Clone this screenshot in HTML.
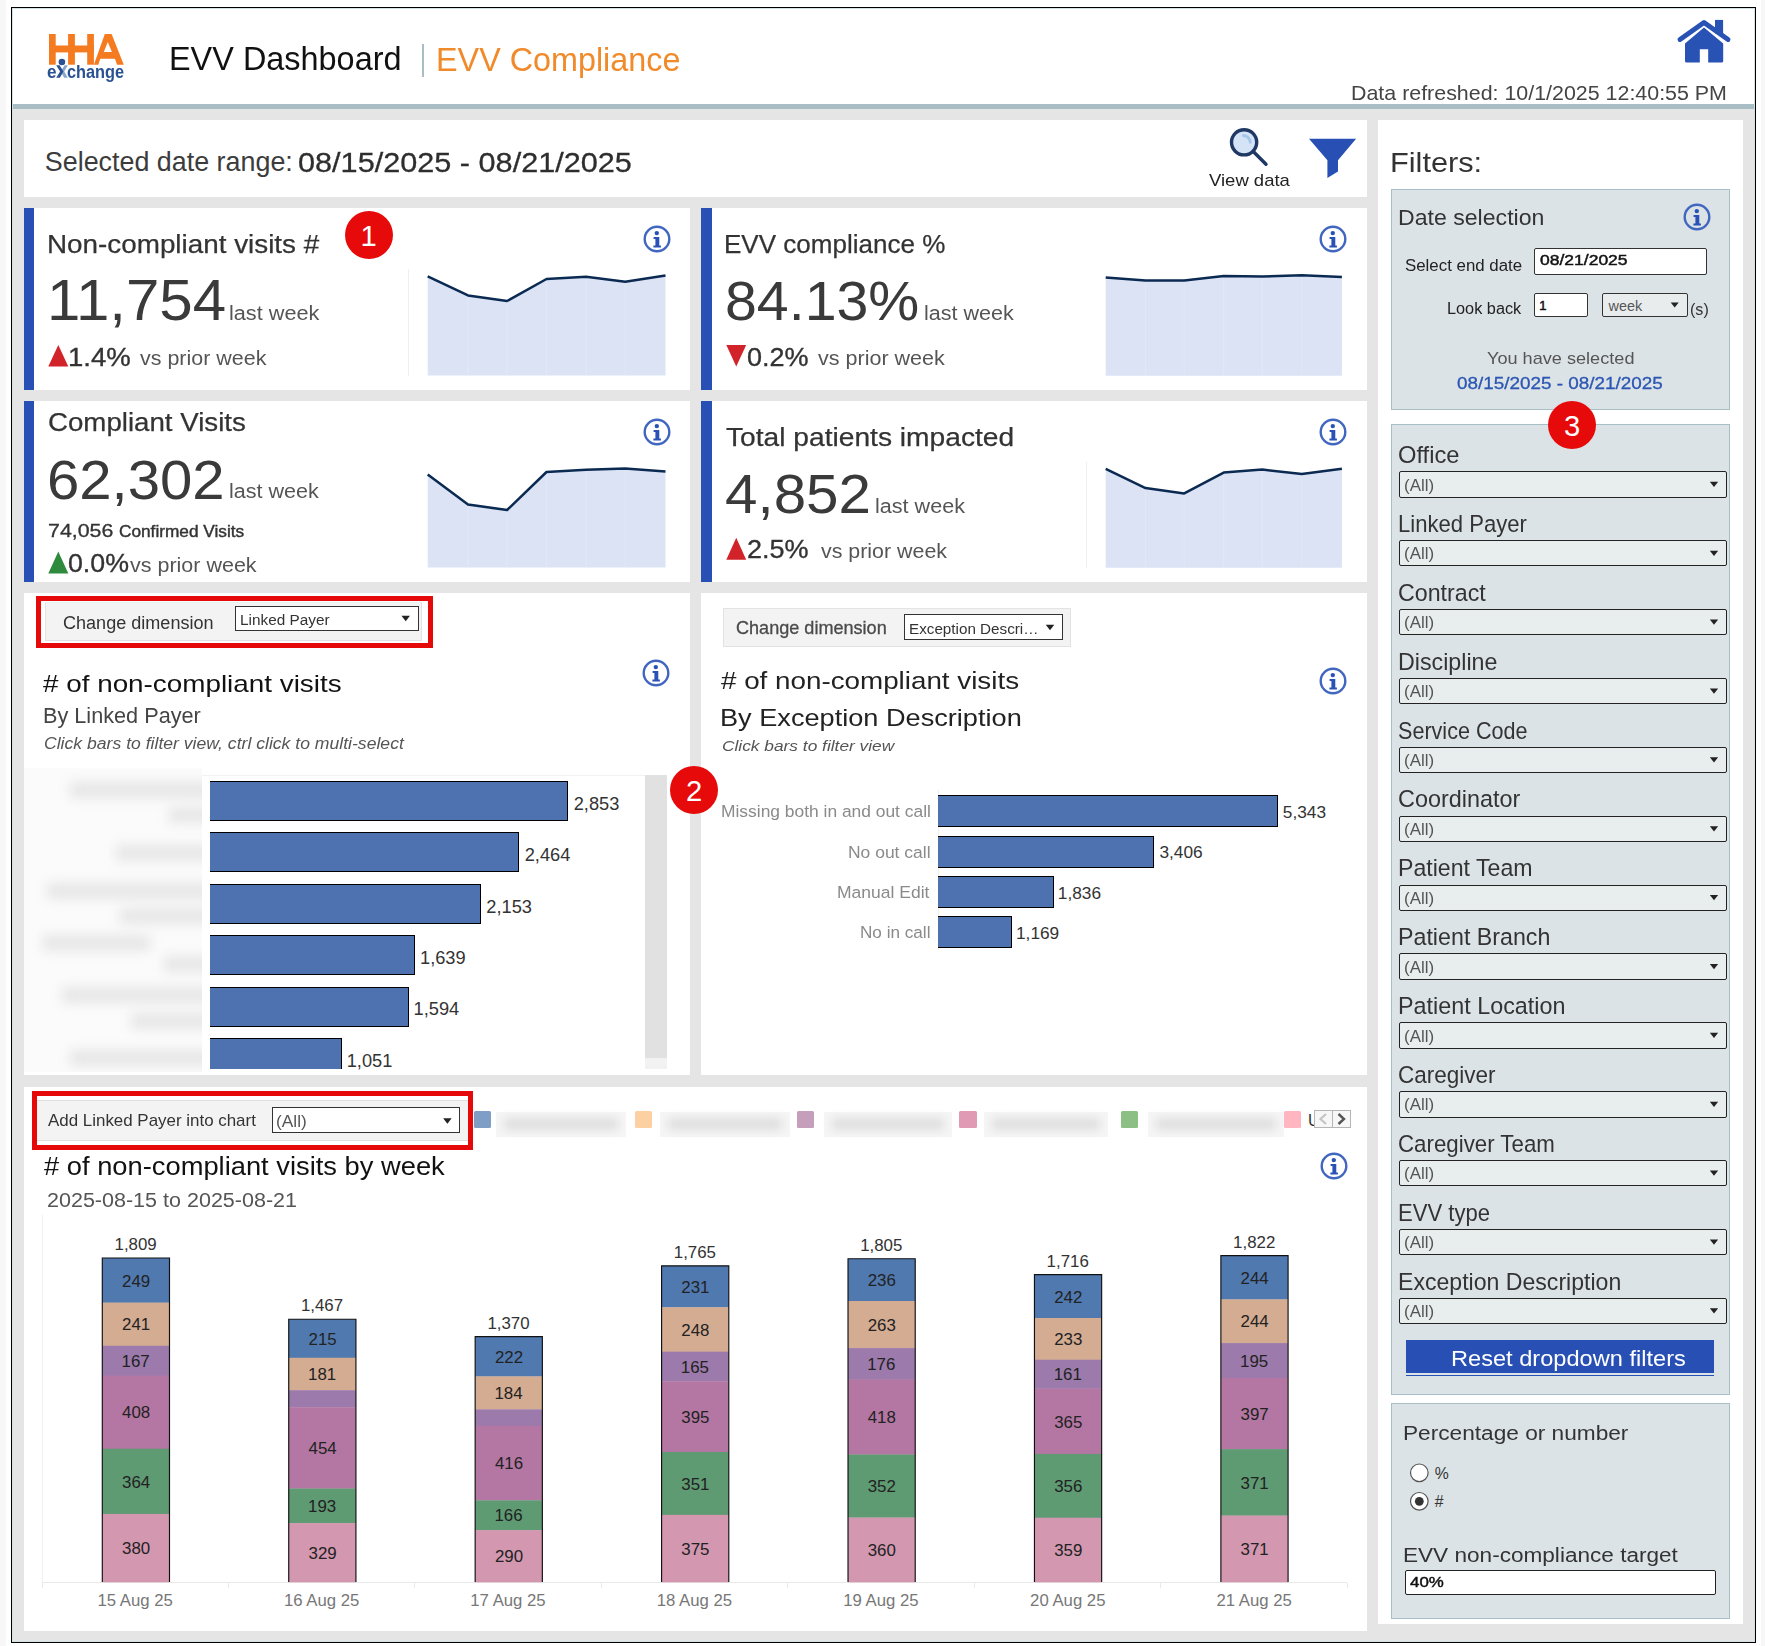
<!DOCTYPE html>
<html><head><meta charset="utf-8"><style>
html,body{margin:0;padding:0}
body{width:1765px;height:1646px;position:relative;overflow:hidden;background:#fff;font-family:"Liberation Sans",sans-serif}
.a{position:absolute}
.t{white-space:pre;line-height:1}
</style></head><body>
<div class="a" style="left:0px;top:0px;width:6px;height:1646px;background:#f7f7f7;"></div>
<div class="a" style="left:1761px;top:0px;width:4px;height:1646px;background:#f7f7f7;"></div>
<div class="a" style="left:11px;top:7px;width:1745px;height:1636px;background:#000;"></div>
<div class="a" style="left:12.4px;top:8.4px;width:1742.1999999999998px;height:1633.1999999999998px;background:#d3e2e5;"></div>
<div class="a" style="left:13.4px;top:9.4px;width:1740.1999999999998px;height:1631.1999999999998px;background:#fff;"></div>
<div class="a" style="left:13px;top:104px;width:1741px;height:4.5px;background:#a9bec4;"></div>
<div class="a" style="left:13px;top:108.5px;width:1741px;height:1532.5px;background:#e5e5e5;"></div>
<svg class="a" style="left:0;top:0" width="200" height="100" viewBox="0 0 200 100">
<g fill="#f47b20">
<rect x="49" y="34" width="6.7" height="30.7"/>
<rect x="68.1" y="34" width="6.8" height="30.7"/>
<rect x="49" y="45.5" width="45" height="6.9"/>
<rect x="87.2" y="34" width="6.7" height="30.7"/>
<path d="M104.8 34 L111.6 34 L123.8 64.7 L117.1 64.7 L114.9 58.7 L100.3 58.7 L98.3 64.7 L93.9 64.7 Z M103.8 52 L111.9 52 L107.8 42 Z" fill-rule="evenodd"/>
</g>
<circle cx="61.9" cy="62" r="3.3" fill="#2a5293"/>
</svg>
<div class="a t" style="left:46.9px;top:63.3px;font-size:18.00px;color:#2a5293;font-weight:700;font-style:normal;transform:scaleX(0.9500);transform-origin:left;">e</div>
<div class="a t" style="left:66.9px;top:63.3px;font-size:18.00px;color:#2a5293;font-weight:700;font-style:normal;transform:scaleX(0.9063);transform-origin:left;">change</div>
<svg class="a" style="left:0;top:0;overflow:visible" width="1" height="1">
<path d="M64.6 65.3 L67.8 65.3 L64.2 71.6 L67.8 77.8 L64.2 77.8 L60.6 71.6 Z" fill="#8aa5cc"/>
<path d="M56.2 65.3 L59.6 65.3 L63.4 71.6 L59.9 77.8 L56.2 77.8 L60.1 71.6 Z" fill="#2a5293"/>
</svg>
<div class="a t" style="left:169.1px;top:42.6px;font-size:32.78px;color:#111;font-weight:400;font-style:normal;transform:scaleX(0.9895);transform-origin:left;">EVV Dashboard</div>
<div class="a" style="left:421.5px;top:44.4px;width:2.0px;height:32.300000000000004px;background:#a9bec4;"></div>
<div class="a t" style="left:436.2px;top:42.8px;font-size:33.06px;color:#f08a2a;font-weight:400;font-style:normal;transform:scaleX(0.9784);transform-origin:left;">EVV Compliance</div>
<div class="a t" style="left:1350.7px;top:83.5px;font-size:19.48px;color:#444;font-weight:400;font-style:normal;transform:scaleX(1.0992);transform-origin:left;">Data refreshed: 10/1/2025 12:40:55 PM</div>
<svg class="a" style="left:1660px;top:0" width="90" height="80" viewBox="1660 0 90 80">
<rect x="1715" y="19.9" width="8.1" height="13.6" fill="#2852b4"/>
<path d="M1680 39.5 L1704 22.6 L1728 39.5" fill="none" stroke="#2852b4" stroke-width="4.9" stroke-linecap="round" stroke-linejoin="round"/>
<path d="M1685 43.6 L1704 27.6 L1723.2 43.6 L1723.2 61 Q1723.2 62.5 1721.7 62.5 L1708.2 62.5 L1708.2 49.3 L1699.8 49.3 L1699.8 62.5 L1686.5 62.5 Q1685 62.5 1685 61 Z" fill="#2852b4"/>
</svg>
<div class="a" style="left:24px;top:120px;width:1343px;height:77px;background:#fff;"></div>
<div class="a" style="left:24px;top:208px;width:666px;height:182px;background:#fff;"></div>
<div class="a" style="left:701px;top:208px;width:666px;height:182px;background:#fff;"></div>
<div class="a" style="left:24px;top:401px;width:666px;height:181px;background:#fff;"></div>
<div class="a" style="left:701px;top:401px;width:666px;height:181px;background:#fff;"></div>
<div class="a" style="left:24px;top:593px;width:666px;height:482px;background:#fff;"></div>
<div class="a" style="left:701px;top:593px;width:666px;height:482px;background:#fff;"></div>
<div class="a" style="left:24px;top:1087px;width:1343px;height:544px;background:#fff;"></div>
<div class="a" style="left:1378px;top:120px;width:365px;height:1504px;background:#fff;"></div>
<div class="a t" style="left:44.8px;top:149.1px;font-size:26.89px;color:#3c3c3c;font-weight:400;font-style:normal;">Selected date range:</div>
<div class="a t" style="left:298.3px;top:147.7px;font-size:28.53px;color:#2e2e2e;font-weight:400;font-style:normal;transform:scaleX(1.0744);transform-origin:left;-webkit-text-stroke:0.3px #2e2e2e;">08/15/2025 - 08/21/2025</div>
<svg class="a" style="left:0;top:0;overflow:visible" width="1" height="1">
<circle cx="1244.1" cy="142.3" r="12.6" fill="#d4e3f5" stroke="#1f3864" stroke-width="3.4"/>
<path d="M1243.5 135.5 A7.5 7.5 0 0 1 1250.3 142.2" fill="none" stroke="#a6c6ea" stroke-width="3" stroke-linecap="round"/>
<line x1="1254" y1="152.2" x2="1266" y2="164.2" stroke="#1f3864" stroke-width="3.4" stroke-linecap="round"/>
<path d="M1309 138.8 L1356.1 138.8 L1338 160.2 L1338 171.6 L1327.4 178 L1327.4 160.2 Z" fill="#2850b4"/>
</svg>
<div class="a t" style="left:1208.9px;top:171.6px;font-size:17.15px;color:#222;font-weight:400;font-style:normal;transform:scaleX(1.0786);transform-origin:left;">View data</div>
<div class="a" style="left:24px;top:208px;width:10px;height:182px;background:#2850b4;"></div>
<div class="a" style="left:701px;top:208px;width:11px;height:182px;background:#2850b4;"></div>
<div class="a" style="left:24px;top:401px;width:10px;height:181px;background:#2850b4;"></div>
<div class="a" style="left:701px;top:401px;width:11px;height:181px;background:#2850b4;"></div>
<div class="a t" style="left:47.3px;top:231.3px;font-size:26.61px;color:#333;font-weight:400;font-style:normal;transform:scaleX(1.0458);transform-origin:left;-webkit-text-stroke:0.25px #333;">Non-compliant visits #</div>
<div class="a t" style="left:46.8px;top:272.3px;font-size:56.93px;color:#3a3a3a;font-weight:400;font-style:normal;transform:scaleX(1.0543);transform-origin:left;">11,754</div>
<div class="a t" style="left:229.2px;top:302.8px;font-size:20.58px;color:#555;font-weight:400;font-style:normal;transform:scaleX(1.0535);transform-origin:left;">last week</div>
<svg class="a" style="left:0;top:0;overflow:visible" width="1" height="1"><path d="M48.3 366.6 L68.3 366.6 L58.3 345 Z" fill="#d2232a"/></svg>
<div class="a t" style="left:67.8px;top:343.5px;font-size:26.47px;color:#333;font-weight:400;font-style:normal;transform:scaleX(1.0399);transform-origin:left;-webkit-text-stroke:0.35px #333;">1.4%</div>
<div class="a t" style="left:140.0px;top:349.3px;font-size:19.62px;color:#555;font-weight:400;font-style:normal;transform:scaleX(1.0941);transform-origin:left;">vs prior week</div>
<div class="a" style="left:408px;top:269px;width:1px;height:107px;background:#efefef;"></div>
<svg class="a" style="left:0;top:0;overflow:visible" width="1" height="1">
<polygon points="427.7,375.5 427.7,276.4 468.0,295.4 507.1,301.0 546.5,279.0 586.1,276.7 625.2,281.8 665.5,275.5 665.5,375.5" fill="#dbe3f5"/>
<line x1="468.0" y1="297.4" x2="468.0" y2="375.5" stroke="#e2e8f7" stroke-width="1"/><line x1="507.1" y1="303.0" x2="507.1" y2="375.5" stroke="#e2e8f7" stroke-width="1"/><line x1="546.5" y1="281.0" x2="546.5" y2="375.5" stroke="#e2e8f7" stroke-width="1"/><line x1="586.1" y1="278.7" x2="586.1" y2="375.5" stroke="#e2e8f7" stroke-width="1"/><line x1="625.2" y1="283.8" x2="625.2" y2="375.5" stroke="#e2e8f7" stroke-width="1"/>
<polyline points="427.7,276.4 468.0,295.4 507.1,301.0 546.5,279.0 586.1,276.7 625.2,281.8 665.5,275.5" fill="none" stroke="#0b2a52" stroke-width="2.5" stroke-linejoin="round"/>
</svg>
<svg class="a" style="left:640.6px;top:223px" width="32" height="32" viewBox="-16 -16 32 32">
<g transform="scale(1.0)"><circle cx="0" cy="0" r="12.3" fill="none" stroke="#4166c0" stroke-width="2.4"/>
<circle cx="-0.2" cy="-5.9" r="2.2" fill="#2a52b6"/>
<path d="M-3.4 -1.9 L2.3 -1.9 L2.3 6.6 L3.9 6.6 L3.9 8.5 L-3.6 8.5 L-3.6 6.6 L-1.6 6.6 L-1.6 0 L-3.4 0 Z" fill="#2a52b6"/></g>
</svg>
<div class="a" style="left:345px;top:210.5px;width:48px;height:48px;border-radius:50%;background:#e60a0a"></div>
<div class="a t" style="left:360.5px;top:221.5px;font-size:29.22px;color:#fff;font-weight:400;font-style:normal;">1</div>
<div class="a t" style="left:724.3px;top:231.3px;font-size:26.61px;color:#333;font-weight:400;font-style:normal;transform:scaleX(0.9780);transform-origin:left;-webkit-text-stroke:0.25px #333;">EVV compliance %</div>
<div class="a t" style="left:725.4px;top:273.1px;font-size:55.97px;color:#3a3a3a;font-weight:400;font-style:normal;transform:scaleX(1.0235);transform-origin:left;">84.13%</div>
<div class="a t" style="left:923.6px;top:302.8px;font-size:20.58px;color:#555;font-weight:400;font-style:normal;transform:scaleX(1.0464);transform-origin:left;">last week</div>
<svg class="a" style="left:0;top:0;overflow:visible" width="1" height="1"><path d="M726.3 345 L746.2 345 L736.25 366.6 Z" fill="#d2232a"/></svg>
<div class="a t" style="left:746.8px;top:343.5px;font-size:26.47px;color:#333;font-weight:400;font-style:normal;transform:scaleX(1.0205);transform-origin:left;-webkit-text-stroke:0.35px #333;">0.2%</div>
<div class="a t" style="left:818.0px;top:349.3px;font-size:19.62px;color:#555;font-weight:400;font-style:normal;transform:scaleX(1.0976);transform-origin:left;">vs prior week</div>
<svg class="a" style="left:0;top:0;overflow:visible" width="1" height="1">
<polygon points="1105.7,375.7 1105.7,277.4 1145.5,280.5 1184.2,280.5 1223.7,276.1 1262.3,276.5 1301.8,275.3 1341.9,277.0 1341.9,375.7" fill="#dbe3f5"/>
<line x1="1145.5" y1="282.5" x2="1145.5" y2="375.7" stroke="#e2e8f7" stroke-width="1"/><line x1="1184.2" y1="282.5" x2="1184.2" y2="375.7" stroke="#e2e8f7" stroke-width="1"/><line x1="1223.7" y1="278.1" x2="1223.7" y2="375.7" stroke="#e2e8f7" stroke-width="1"/><line x1="1262.3" y1="278.5" x2="1262.3" y2="375.7" stroke="#e2e8f7" stroke-width="1"/><line x1="1301.8" y1="277.3" x2="1301.8" y2="375.7" stroke="#e2e8f7" stroke-width="1"/>
<polyline points="1105.7,277.4 1145.5,280.5 1184.2,280.5 1223.7,276.1 1262.3,276.5 1301.8,275.3 1341.9,277.0" fill="none" stroke="#0b2a52" stroke-width="2.5" stroke-linejoin="round"/>
</svg>
<svg class="a" style="left:1316.9px;top:222.9px" width="32" height="32" viewBox="-16 -16 32 32">
<g transform="scale(1.0)"><circle cx="0" cy="0" r="12.3" fill="none" stroke="#4166c0" stroke-width="2.4"/>
<circle cx="-0.2" cy="-5.9" r="2.2" fill="#2a52b6"/>
<path d="M-3.4 -1.9 L2.3 -1.9 L2.3 6.6 L3.9 6.6 L3.9 8.5 L-3.6 8.5 L-3.6 6.6 L-1.6 6.6 L-1.6 0 L-3.4 0 Z" fill="#2a52b6"/></g>
</svg>
<div class="a t" style="left:48.0px;top:409.3px;font-size:26.61px;color:#333;font-weight:400;font-style:normal;transform:scaleX(1.0398);transform-origin:left;-webkit-text-stroke:0.25px #333;">Compliant Visits</div>
<div class="a t" style="left:47.4px;top:451.9px;font-size:55.97px;color:#3a3a3a;font-weight:400;font-style:normal;transform:scaleX(1.0376);transform-origin:left;">62,302</div>
<div class="a t" style="left:228.6px;top:481.4px;font-size:20.58px;color:#555;font-weight:400;font-style:normal;transform:scaleX(1.0464);transform-origin:left;">last week</div>
<div class="a t" style="left:48.3px;top:520.8px;font-size:19.20px;color:#333;font-weight:400;font-style:normal;transform:scaleX(1.1135);transform-origin:left;-webkit-text-stroke:0.3px #333;">74,056</div>
<div class="a t" style="left:118.6px;top:523.7px;font-size:15.78px;color:#333;font-weight:400;font-style:normal;transform:scaleX(1.0933);transform-origin:left;-webkit-text-stroke:0.4px #333;">Confirmed Visits</div>
<svg class="a" style="left:0;top:0;overflow:visible" width="1" height="1"><path d="M48.3 573.6 L68.3 573.6 L58.3 551.4 Z" fill="#2e8b3e"/></svg>
<div class="a t" style="left:68.4px;top:549.9px;font-size:26.47px;color:#333;font-weight:400;font-style:normal;transform:scaleX(1.0103);transform-origin:left;-webkit-text-stroke:0.35px #333;">0.0%</div>
<div class="a t" style="left:130.0px;top:555.7px;font-size:19.62px;color:#555;font-weight:400;font-style:normal;transform:scaleX(1.0959);transform-origin:left;">vs prior week</div>
<svg class="a" style="left:0;top:0;overflow:visible" width="1" height="1">
<polygon points="427.7,567.5 427.7,474.4 468.0,504.6 507.1,510.0 546.5,472.0 586.1,469.8 625.2,468.4 665.5,471.5 665.5,567.5" fill="#dbe3f5"/>
<line x1="468.0" y1="506.6" x2="468.0" y2="567.5" stroke="#e2e8f7" stroke-width="1"/><line x1="507.1" y1="512.0" x2="507.1" y2="567.5" stroke="#e2e8f7" stroke-width="1"/><line x1="546.5" y1="474.0" x2="546.5" y2="567.5" stroke="#e2e8f7" stroke-width="1"/><line x1="586.1" y1="471.8" x2="586.1" y2="567.5" stroke="#e2e8f7" stroke-width="1"/><line x1="625.2" y1="470.4" x2="625.2" y2="567.5" stroke="#e2e8f7" stroke-width="1"/>
<polyline points="427.7,474.4 468.0,504.6 507.1,510.0 546.5,472.0 586.1,469.8 625.2,468.4 665.5,471.5" fill="none" stroke="#0b2a52" stroke-width="2.5" stroke-linejoin="round"/>
</svg>
<svg class="a" style="left:640.7px;top:416.4px" width="32" height="32" viewBox="-16 -16 32 32">
<g transform="scale(1.0)"><circle cx="0" cy="0" r="12.3" fill="none" stroke="#4166c0" stroke-width="2.4"/>
<circle cx="-0.2" cy="-5.9" r="2.2" fill="#2a52b6"/>
<path d="M-3.4 -1.9 L2.3 -1.9 L2.3 6.6 L3.9 6.6 L3.9 8.5 L-3.6 8.5 L-3.6 6.6 L-1.6 6.6 L-1.6 0 L-3.4 0 Z" fill="#2a52b6"/></g>
</svg>
<div class="a t" style="left:726.3px;top:423.5px;font-size:26.61px;color:#333;font-weight:400;font-style:normal;transform:scaleX(1.0587);transform-origin:left;-webkit-text-stroke:0.25px #333;">Total patients impacted</div>
<div class="a t" style="left:725.3px;top:466.4px;font-size:55.97px;color:#3a3a3a;font-weight:400;font-style:normal;transform:scaleX(1.0424);transform-origin:left;">4,852</div>
<div class="a t" style="left:874.8px;top:495.9px;font-size:20.58px;color:#555;font-weight:400;font-style:normal;transform:scaleX(1.0488);transform-origin:left;">last week</div>
<svg class="a" style="left:0;top:0;overflow:visible" width="1" height="1"><path d="M726.3 559.8 L746.2 559.8 L736.25 537.8 Z" fill="#d2232a"/></svg>
<div class="a t" style="left:746.8px;top:536.3px;font-size:26.47px;color:#333;font-weight:400;font-style:normal;transform:scaleX(1.0205);transform-origin:left;-webkit-text-stroke:0.35px #333;">2.5%</div>
<div class="a t" style="left:821.0px;top:542.1px;font-size:19.62px;color:#555;font-weight:400;font-style:normal;transform:scaleX(1.0907);transform-origin:left;">vs prior week</div>
<div class="a" style="left:1086px;top:462px;width:1px;height:106px;background:#efefef;"></div>
<svg class="a" style="left:0;top:0;overflow:visible" width="1" height="1">
<polygon points="1105.7,567.7 1105.7,468.8 1145.5,488.1 1184.2,493.4 1223.7,472.6 1262.3,469.6 1301.8,474.0 1341.9,468.8 1341.9,567.7" fill="#dbe3f5"/>
<line x1="1145.5" y1="490.1" x2="1145.5" y2="567.7" stroke="#e2e8f7" stroke-width="1"/><line x1="1184.2" y1="495.4" x2="1184.2" y2="567.7" stroke="#e2e8f7" stroke-width="1"/><line x1="1223.7" y1="474.6" x2="1223.7" y2="567.7" stroke="#e2e8f7" stroke-width="1"/><line x1="1262.3" y1="471.6" x2="1262.3" y2="567.7" stroke="#e2e8f7" stroke-width="1"/><line x1="1301.8" y1="476.0" x2="1301.8" y2="567.7" stroke="#e2e8f7" stroke-width="1"/>
<polyline points="1105.7,468.8 1145.5,488.1 1184.2,493.4 1223.7,472.6 1262.3,469.6 1301.8,474.0 1341.9,468.8" fill="none" stroke="#0b2a52" stroke-width="2.5" stroke-linejoin="round"/>
</svg>
<svg class="a" style="left:1316.9px;top:416.4px" width="32" height="32" viewBox="-16 -16 32 32">
<g transform="scale(1.0)"><circle cx="0" cy="0" r="12.3" fill="none" stroke="#4166c0" stroke-width="2.4"/>
<circle cx="-0.2" cy="-5.9" r="2.2" fill="#2a52b6"/>
<path d="M-3.4 -1.9 L2.3 -1.9 L2.3 6.6 L3.9 6.6 L3.9 8.5 L-3.6 8.5 L-3.6 6.6 L-1.6 6.6 L-1.6 0 L-3.4 0 Z" fill="#2a52b6"/></g>
</svg>
<div class="a" style="left:36px;top:596px;width:397px;height:52px;box-sizing:border-box;border:5px solid #e50909;"></div>
<div class="a" style="left:41px;top:601px;width:387px;height:42px;background:#fff;"></div>
<div class="a" style="left:45px;top:601.5px;width:377px;height:39.0px;background:#f3f3f3;box-sizing:border-box;border:1px solid #e2e2e2;border-top-color:#e4f4f4;"></div>
<div class="a t" style="left:62.6px;top:612.6px;font-size:19.20px;color:#333;font-weight:400;font-style:normal;transform:scaleX(0.9408);transform-origin:left;">Change dimension</div>
<div class="a" style="left:235px;top:605.5px;width:183.8px;height:25.100000000000023px;background:#fff;box-sizing:border-box;border:1.3px solid #333;"></div>
<div class="a t" style="left:239.5px;top:611.7px;font-size:15.09px;color:#333;font-weight:400;font-style:normal;transform:scaleX(1.0174);transform-origin:left;">Linked Payer</div>
<svg class="a" style="left:0;top:0;overflow:visible" width="1" height="1"><path d="M401.45 615.65 L409.95 615.65 L405.7 621.15 Z" fill="#222"/></svg>
<div class="a t" style="left:43.0px;top:671.7px;font-size:24.01px;color:#111;font-weight:400;font-style:normal;transform:scaleX(1.1598);transform-origin:left;"># of non-compliant visits</div>
<div class="a t" style="left:43.2px;top:705.2px;font-size:22.63px;color:#444;font-weight:400;font-style:normal;transform:scaleX(0.9579);transform-origin:left;">By Linked Payer</div>
<div class="a t" style="left:43.9px;top:735.8px;font-size:15.78px;color:#555;font-weight:400;font-style:italic;transform:scaleX(1.1161);transform-origin:left;">Click bars to filter view, ctrl click to multi-select</div>
<svg class="a" style="left:639.5px;top:656.5px" width="32" height="32" viewBox="-16 -16 32 32">
<g transform="scale(1.0)"><circle cx="0" cy="0" r="12.3" fill="none" stroke="#4166c0" stroke-width="2.4"/>
<circle cx="-0.2" cy="-5.9" r="2.2" fill="#2a52b6"/>
<path d="M-3.4 -1.9 L2.3 -1.9 L2.3 6.6 L3.9 6.6 L3.9 8.5 L-3.6 8.5 L-3.6 6.6 L-1.6 6.6 L-1.6 0 L-3.4 0 Z" fill="#2a52b6"/></g>
</svg>
<div class="a" style="left:24px;top:768px;width:178px;height:304px;background:#fbfbfb;"></div>
<div class="a" style="left:24px;top:768px;width:178px;height:304px;overflow:hidden">
<div class="a" style="left:46px;top:14px;width:160px;height:16px;background:#e6e6e6;filter:blur(6px)"></div>
<div class="a" style="left:145px;top:39px;width:61px;height:16px;background:#e6e6e6;filter:blur(6px)"></div>
<div class="a" style="left:92px;top:77px;width:114px;height:16px;background:#e6e6e6;filter:blur(6px)"></div>
<div class="a" style="left:23px;top:115px;width:183px;height:16px;background:#e6e6e6;filter:blur(6px)"></div>
<div class="a" style="left:96px;top:140px;width:110px;height:16px;background:#e6e6e6;filter:blur(6px)"></div>
<div class="a" style="left:19px;top:167px;width:107px;height:16px;background:#e6e6e6;filter:blur(6px)"></div>
<div class="a" style="left:140px;top:188px;width:66px;height:16px;background:#e6e6e6;filter:blur(6px)"></div>
<div class="a" style="left:38px;top:219px;width:168px;height:16px;background:#e6e6e6;filter:blur(6px)"></div>
<div class="a" style="left:107px;top:245px;width:99px;height:16px;background:#e6e6e6;filter:blur(6px)"></div>
<div class="a" style="left:46px;top:282px;width:160px;height:16px;background:#e6e6e6;filter:blur(6px)"></div>
</div>
<div class="a" style="left:202px;top:775px;width:443px;height:1px;background:#f2f2f2;"></div>
<div class="a" style="left:209.6px;top:780.9px;width:358.4px;height:40.0px;background:#4e72b0;box-sizing:border-box;border:1.8px solid #000;border-left:none;"></div>
<div class="a t" style="left:573.7px;top:794.5px;font-size:18.24px;color:#333;font-weight:400;font-style:normal;">2,853</div>
<div class="a" style="left:209.6px;top:832.1px;width:309.4px;height:40.0px;background:#4e72b0;box-sizing:border-box;border:1.8px solid #000;border-left:none;"></div>
<div class="a t" style="left:524.7px;top:845.7px;font-size:18.24px;color:#333;font-weight:400;font-style:normal;">2,464</div>
<div class="a" style="left:209.6px;top:884.1px;width:271.0px;height:40.0px;background:#4e72b0;box-sizing:border-box;border:1.8px solid #000;border-left:none;"></div>
<div class="a t" style="left:486.3px;top:897.7px;font-size:18.24px;color:#333;font-weight:400;font-style:normal;">2,153</div>
<div class="a" style="left:209.6px;top:935.4px;width:205.70000000000002px;height:40.0px;background:#4e72b0;box-sizing:border-box;border:1.8px solid #000;border-left:none;"></div>
<div class="a t" style="left:420.0px;top:949.0px;font-size:18.24px;color:#333;font-weight:400;font-style:normal;">1,639</div>
<div class="a" style="left:209.6px;top:986.7px;width:199.29999999999998px;height:40.0px;background:#4e72b0;box-sizing:border-box;border:1.8px solid #000;border-left:none;"></div>
<div class="a t" style="left:413.6px;top:1000.3px;font-size:18.24px;color:#333;font-weight:400;font-style:normal;">1,594</div>
<div class="a" style="left:209.6px;top:1038.3px;width:132.4px;height:31.100000000000136px;background:#4e72b0;box-sizing:border-box;border:1.8px solid #000;border-left:none;border-bottom:none;"></div>
<div class="a t" style="left:346.7px;top:1051.9px;font-size:18.24px;color:#333;font-weight:400;font-style:normal;">1,051</div>
<div class="a" style="left:645px;top:775px;width:22px;height:283px;background:#e1e1e1;"></div>
<div class="a" style="left:645px;top:1058px;width:22px;height:11px;background:#f2f2f2;"></div>
<div class="a" style="left:670px;top:765.5px;width:48px;height:48px;border-radius:50%;background:#e60a0a"></div>
<div class="a t" style="left:686.0px;top:776.5px;font-size:29.22px;color:#fff;font-weight:400;font-style:normal;">2</div>
<div class="a" style="left:723px;top:608px;width:347.5999999999999px;height:39.39999999999998px;background:#f3f3f3;box-sizing:border-box;border:1px solid #e3e3e3;"></div>
<div class="a t" style="left:735.8px;top:620.1px;font-size:17.97px;color:#4a4a4a;font-weight:400;font-style:normal;transform:scaleX(1.0066);transform-origin:left;-webkit-text-stroke:0.3px #4a4a4a;">Change dimension</div>
<div class="a" style="left:904.3px;top:614.4px;width:158.29999999999995px;height:26.100000000000023px;background:#fff;box-sizing:border-box;border:1.3px solid #333;"></div>
<div class="a t" style="left:908.5px;top:620.6px;font-size:15.50px;color:#333;font-weight:400;font-style:normal;transform:scaleX(0.9822);transform-origin:left;">Exception Descri&hellip;</div>
<svg class="a" style="left:0;top:0;overflow:visible" width="1" height="1"><path d="M1045.75 624.75 L1054.25 624.75 L1050 630.25 Z" fill="#222"/></svg>
<div class="a t" style="left:721.4px;top:669.9px;font-size:23.59px;color:#222;font-weight:400;font-style:normal;transform:scaleX(1.1783);transform-origin:left;"># of non-compliant visits</div>
<div class="a t" style="left:720.3px;top:705.5px;font-size:24.14px;color:#222;font-weight:400;font-style:normal;transform:scaleX(1.1251);transform-origin:left;">By Exception Description</div>
<div class="a t" style="left:722.0px;top:739.4px;font-size:14.81px;color:#555;font-weight:400;font-style:italic;transform:scaleX(1.1704);transform-origin:left;">Click bars to filter view</div>
<svg class="a" style="left:1316.9px;top:664.6px" width="32" height="32" viewBox="-16 -16 32 32">
<g transform="scale(1.0)"><circle cx="0" cy="0" r="12.3" fill="none" stroke="#4166c0" stroke-width="2.4"/>
<circle cx="-0.2" cy="-5.9" r="2.2" fill="#2a52b6"/>
<path d="M-3.4 -1.9 L2.3 -1.9 L2.3 6.6 L3.9 6.6 L3.9 8.5 L-3.6 8.5 L-3.6 6.6 L-1.6 6.6 L-1.6 0 L-3.4 0 Z" fill="#2a52b6"/></g>
</svg>
<div class="a" style="left:937.5px;top:790px;width:1.0px;height:160px;background:#f0f0f0;"></div>
<div class="a" style="left:938px;top:794.9px;width:339.79999999999995px;height:32px;background:#4e72b0;box-sizing:border-box;border:1.6px solid #000;border-left:none"></div>
<div class="a t" style="left:1282.8px;top:803.8px;font-size:17.28px;color:#333;font-weight:400;font-style:normal;">5,343</div>
<div class="a t" style="left:720.6px;top:803.9px;font-size:16.87px;color:#8a8a8a;font-weight:400;font-style:normal;transform:scaleX(1.0321);transform-origin:left;">Missing both in and out call</div>
<div class="a" style="left:938px;top:835.5px;width:216.4000000000001px;height:32px;background:#4e72b0;box-sizing:border-box;border:1.6px solid #000;border-left:none"></div>
<div class="a t" style="left:1159.4px;top:844.4px;font-size:17.28px;color:#333;font-weight:400;font-style:normal;">3,406</div>
<div class="a t" style="left:848.0px;top:844.5px;font-size:16.87px;color:#8a8a8a;font-weight:400;font-style:normal;transform:scaleX(1.0358);transform-origin:left;">No out call</div>
<div class="a" style="left:938px;top:876.1px;width:115.79999999999995px;height:32px;background:#4e72b0;box-sizing:border-box;border:1.6px solid #000;border-left:none"></div>
<div class="a t" style="left:1057.8px;top:885.0px;font-size:17.28px;color:#333;font-weight:400;font-style:normal;">1,836</div>
<div class="a t" style="left:837.0px;top:885.1px;font-size:16.87px;color:#8a8a8a;font-weight:400;font-style:normal;transform:scaleX(1.0380);transform-origin:left;">Manual Edit</div>
<div class="a" style="left:938px;top:916.4px;width:74px;height:32px;background:#4e72b0;box-sizing:border-box;border:1.6px solid #000;border-left:none"></div>
<div class="a t" style="left:1016.0px;top:925.3px;font-size:17.28px;color:#333;font-weight:400;font-style:normal;">1,169</div>
<div class="a t" style="left:860.0px;top:925.4px;font-size:16.87px;color:#8a8a8a;font-weight:400;font-style:normal;transform:scaleX(1.0164);transform-origin:left;">No in call</div>
<div class="a" style="left:32.2px;top:1091px;width:440.5px;height:58.799999999999955px;box-sizing:border-box;border:5px solid #e50909;"></div>
<div class="a" style="left:36.8px;top:1099.5px;width:431.2px;height:41.0px;background:#f3f3f3;"></div>
<div class="a" style="left:36.8px;top:1099.5px;width:431.2px;height:1.0px;background:#e0e0e0;"></div>
<div class="a" style="left:36.8px;top:1139.5px;width:431.2px;height:1.0px;background:#e0e0e0;"></div>
<div class="a t" style="left:48.0px;top:1112.4px;font-size:17.15px;color:#333;font-weight:400;font-style:normal;transform:scaleX(0.9871);transform-origin:left;">Add Linked Payer into chart</div>
<div class="a" style="left:272.3px;top:1107.4px;width:188.09999999999997px;height:25.199999999999818px;background:#fff;box-sizing:border-box;border:1.3px solid #333;"></div>
<div class="a t" style="left:276.4px;top:1112.6px;font-size:16.46px;color:#555;font-weight:400;font-style:normal;transform:scaleX(1.0517);transform-origin:left;">(All)</div>
<svg class="a" style="left:0;top:0;overflow:visible" width="1" height="1"><path d="M443.15 1118.25 L451.65 1118.25 L447.4 1123.75 Z" fill="#222"/></svg>
<div class="a" style="left:473.7px;top:1111.2px;width:17.3px;height:17.3px;background:#7e9ec5;border-radius:1.5px"></div>
<div class="a" style="left:635px;top:1111.2px;width:17.3px;height:17.3px;background:#fdd0a2;border-radius:1.5px"></div>
<div class="a" style="left:797px;top:1111.2px;width:17.3px;height:17.3px;background:#c49ebb;border-radius:1.5px"></div>
<div class="a" style="left:959.3px;top:1111.2px;width:17.3px;height:17.3px;background:#e09ab3;border-radius:1.5px"></div>
<div class="a" style="left:1121.1px;top:1111.2px;width:17.3px;height:17.3px;background:#8cbf84;border-radius:1.5px"></div>
<div class="a" style="left:1283.5px;top:1111.2px;width:17.3px;height:17.3px;background:#ffb6c1;border-radius:1.5px"></div>
<div class="a" style="left:496px;top:1112px;width:129.79999999999995px;height:25.40000000000009px;background:#f6f6f6;"></div>
<div class="a" style="left:504px;top:1118px;width:113.79999999999995px;height:12px;background:#dedede;filter:blur(5px)"></div>
<div class="a" style="left:660.2px;top:1112px;width:129.39999999999998px;height:25.40000000000009px;background:#f6f6f6;"></div>
<div class="a" style="left:668.2px;top:1118px;width:113.39999999999998px;height:12px;background:#dedede;filter:blur(5px)"></div>
<div class="a" style="left:824px;top:1112px;width:127.70000000000005px;height:25.40000000000009px;background:#f6f6f6;"></div>
<div class="a" style="left:832px;top:1118px;width:111.70000000000005px;height:12px;background:#dedede;filter:blur(5px)"></div>
<div class="a" style="left:984.3px;top:1112px;width:123.70000000000005px;height:25.40000000000009px;background:#f6f6f6;"></div>
<div class="a" style="left:992.3px;top:1118px;width:107.70000000000005px;height:12px;background:#dedede;filter:blur(5px)"></div>
<div class="a" style="left:1148px;top:1112px;width:135.5px;height:25.40000000000009px;background:#f6f6f6;"></div>
<div class="a" style="left:1156px;top:1118px;width:119.5px;height:12px;background:#dedede;filter:blur(5px)"></div>
<div class="a t" style="left:1308.0px;top:1111.6px;font-size:16.46px;color:#333;font-weight:400;font-style:normal;">U</div>
<div class="a" style="left:1314.2px;top:1110px;width:36.399999999999864px;height:17.700000000000045px;background:#f7f7f7;box-sizing:border-box;border:1px solid #b5b5b5;"></div>
<div class="a" style="left:1332px;top:1110px;width:1px;height:17.700000000000045px;background:#b5b5b5;"></div>
<svg class="a" style="left:0;top:0;overflow:visible" width="1" height="1">
<path d="M1326 1114 L1320.5 1119 L1326 1124" fill="none" stroke="#c4c4c4" stroke-width="2.2"/>
<path d="M1338.5 1114 L1344 1119 L1338.5 1124" fill="none" stroke="#555" stroke-width="2.4"/>
</svg>
<div class="a t" style="left:43.5px;top:1153.2px;font-size:26.06px;color:#111;font-weight:400;font-style:normal;transform:scaleX(1.0486);transform-origin:left;"># of non-compliant visits by week</div>
<div class="a t" style="left:47.0px;top:1190.0px;font-size:20.58px;color:#555;font-weight:400;font-style:normal;transform:scaleX(1.0455);transform-origin:left;">2025-08-15 to 2025-08-21</div>
<svg class="a" style="left:1317.8px;top:1150px" width="32" height="32" viewBox="-16 -16 32 32">
<g transform="scale(1.0)"><circle cx="0" cy="0" r="12.3" fill="none" stroke="#4166c0" stroke-width="2.4"/>
<circle cx="-0.2" cy="-5.9" r="2.2" fill="#2a52b6"/>
<path d="M-3.4 -1.9 L2.3 -1.9 L2.3 6.6 L3.9 6.6 L3.9 8.5 L-3.6 8.5 L-3.6 6.6 L-1.6 6.6 L-1.6 0 L-3.4 0 Z" fill="#2a52b6"/></g>
</svg>
<div class="a" style="left:41.9px;top:1215px;width:1.0px;height:367px;background:#f0f0f0;"></div>
<div class="a" style="left:42px;top:1581.5px;width:1305px;height:1.0px;background:#e9e9e9;"></div>
<div class="a" style="left:41.5px;top:1583px;width:1.0px;height:5px;background:#e9e9e9;"></div>
<div class="a" style="left:227.93px;top:1583px;width:1.0px;height:5px;background:#e9e9e9;"></div>
<div class="a" style="left:414.36px;top:1583px;width:1.0px;height:5px;background:#e9e9e9;"></div>
<div class="a" style="left:600.79px;top:1583px;width:1.0px;height:5px;background:#e9e9e9;"></div>
<div class="a" style="left:787.22px;top:1583px;width:1.0px;height:5px;background:#e9e9e9;"></div>
<div class="a" style="left:973.6500000000001px;top:1583px;width:1.0px;height:5px;background:#e9e9e9;"></div>
<div class="a" style="left:1160.08px;top:1583px;width:1.0px;height:5px;background:#e9e9e9;"></div>
<div class="a" style="left:1346.51px;top:1583px;width:1.0px;height:5px;background:#e9e9e9;"></div>
<svg class="a" style="left:0;top:0;overflow:visible" width="1" height="1"><rect x="102.30" y="1258.00" width="67.2" height="44.90" fill="#5079b0"/><rect x="102.30" y="1302.60" width="67.2" height="43.46" fill="#d4ac92"/><rect x="102.30" y="1345.76" width="67.2" height="30.21" fill="#9c7aab"/><rect x="102.30" y="1375.67" width="67.2" height="73.37" fill="#b477a3"/><rect x="102.30" y="1448.75" width="67.2" height="65.49" fill="#5e9a72"/><rect x="102.30" y="1513.94" width="67.2" height="68.36" fill="#d397b0"/><path d="M102.30 1582.0 L102.30 1258.00 L169.50 1258.00 L169.50 1582.0" fill="none" stroke="#111" stroke-width="1.15"/></svg>
<div class="a t" style="left:122.0px;top:1273.5px;font-size:16.87px;color:#222;font-weight:400;font-style:normal;">249</div>
<div class="a t" style="left:122.0px;top:1317.4px;font-size:16.87px;color:#222;font-weight:400;font-style:normal;">241</div>
<div class="a t" style="left:121.5px;top:1353.9px;font-size:16.87px;color:#222;font-weight:400;font-style:normal;">167</div>
<div class="a t" style="left:122.0px;top:1405.4px;font-size:16.87px;color:#222;font-weight:400;font-style:normal;">408</div>
<div class="a t" style="left:122.0px;top:1474.6px;font-size:16.87px;color:#222;font-weight:400;font-style:normal;">364</div>
<div class="a t" style="left:122.0px;top:1541.2px;font-size:16.87px;color:#222;font-weight:400;font-style:normal;">380</div>
<div class="a t" style="left:114.5px;top:1237.0px;font-size:16.87px;color:#333;font-weight:400;font-style:normal;">1,809</div>
<div class="a t" style="left:97.4px;top:1592.6px;font-size:16.74px;color:#777;font-weight:400;font-style:normal;">15 Aug 25</div>
<svg class="a" style="left:0;top:0;overflow:visible" width="1" height="1"><rect x="288.73" y="1319.25" width="67.2" height="38.81" fill="#5079b0"/><rect x="288.73" y="1357.76" width="67.2" height="32.72" fill="#d4ac92"/><rect x="288.73" y="1390.18" width="67.2" height="17.31" fill="#9c7aab"/><rect x="288.73" y="1407.19" width="67.2" height="81.61" fill="#b477a3"/><rect x="288.73" y="1488.51" width="67.2" height="34.87" fill="#5e9a72"/><rect x="288.73" y="1523.07" width="67.2" height="59.23" fill="#d397b0"/><path d="M288.73 1582.0 L288.73 1319.25 L355.93 1319.25 L355.93 1582.0" fill="none" stroke="#111" stroke-width="1.15"/></svg>
<div class="a t" style="left:308.5px;top:1331.7px;font-size:16.87px;color:#222;font-weight:400;font-style:normal;">215</div>
<div class="a t" style="left:308.0px;top:1367.2px;font-size:16.87px;color:#222;font-weight:400;font-style:normal;">181</div>
<div class="a t" style="left:308.5px;top:1441.1px;font-size:16.87px;color:#222;font-weight:400;font-style:normal;">454</div>
<div class="a t" style="left:308.0px;top:1499.0px;font-size:16.87px;color:#222;font-weight:400;font-style:normal;">193</div>
<div class="a t" style="left:308.5px;top:1545.8px;font-size:16.87px;color:#222;font-weight:400;font-style:normal;">329</div>
<div class="a t" style="left:300.9px;top:1298.3px;font-size:16.87px;color:#333;font-weight:400;font-style:normal;">1,467</div>
<div class="a t" style="left:283.9px;top:1592.6px;font-size:16.74px;color:#777;font-weight:400;font-style:normal;">16 Aug 25</div>
<svg class="a" style="left:0;top:0;overflow:visible" width="1" height="1"><rect x="475.16" y="1336.63" width="67.2" height="40.06" fill="#5079b0"/><rect x="475.16" y="1376.39" width="67.2" height="33.26" fill="#d4ac92"/><rect x="475.16" y="1409.34" width="67.2" height="16.78" fill="#9c7aab"/><rect x="475.16" y="1425.82" width="67.2" height="74.81" fill="#b477a3"/><rect x="475.16" y="1500.33" width="67.2" height="30.03" fill="#5e9a72"/><rect x="475.16" y="1530.06" width="67.2" height="52.24" fill="#d397b0"/><path d="M475.16 1582.0 L475.16 1336.63 L542.36 1336.63 L542.36 1582.0" fill="none" stroke="#111" stroke-width="1.15"/></svg>
<div class="a t" style="left:494.9px;top:1349.7px;font-size:16.87px;color:#222;font-weight:400;font-style:normal;">222</div>
<div class="a t" style="left:494.4px;top:1386.1px;font-size:16.87px;color:#222;font-weight:400;font-style:normal;">184</div>
<div class="a t" style="left:494.9px;top:1456.3px;font-size:16.87px;color:#222;font-weight:400;font-style:normal;">416</div>
<div class="a t" style="left:494.4px;top:1508.4px;font-size:16.87px;color:#222;font-weight:400;font-style:normal;">166</div>
<div class="a t" style="left:494.9px;top:1549.2px;font-size:16.87px;color:#222;font-weight:400;font-style:normal;">290</div>
<div class="a t" style="left:487.4px;top:1315.6px;font-size:16.87px;color:#333;font-weight:400;font-style:normal;">1,370</div>
<div class="a t" style="left:470.3px;top:1592.6px;font-size:16.74px;color:#777;font-weight:400;font-style:normal;">17 Aug 25</div>
<svg class="a" style="left:0;top:0;overflow:visible" width="1" height="1"><rect x="661.59" y="1265.88" width="67.2" height="41.67" fill="#5079b0"/><rect x="661.59" y="1307.25" width="67.2" height="44.72" fill="#d4ac92"/><rect x="661.59" y="1351.67" width="67.2" height="29.85" fill="#9c7aab"/><rect x="661.59" y="1381.22" width="67.2" height="71.05" fill="#b477a3"/><rect x="661.59" y="1451.97" width="67.2" height="63.17" fill="#5e9a72"/><rect x="661.59" y="1514.84" width="67.2" height="67.46" fill="#d397b0"/><path d="M661.59 1582.0 L661.59 1265.88 L728.79 1265.88 L728.79 1582.0" fill="none" stroke="#111" stroke-width="1.15"/></svg>
<div class="a t" style="left:681.3px;top:1279.8px;font-size:16.87px;color:#222;font-weight:400;font-style:normal;">231</div>
<div class="a t" style="left:681.3px;top:1322.7px;font-size:16.87px;color:#222;font-weight:400;font-style:normal;">248</div>
<div class="a t" style="left:680.8px;top:1359.7px;font-size:16.87px;color:#222;font-weight:400;font-style:normal;">165</div>
<div class="a t" style="left:681.3px;top:1409.8px;font-size:16.87px;color:#222;font-weight:400;font-style:normal;">395</div>
<div class="a t" style="left:681.3px;top:1476.6px;font-size:16.87px;color:#222;font-weight:400;font-style:normal;">351</div>
<div class="a t" style="left:681.3px;top:1541.6px;font-size:16.87px;color:#222;font-weight:400;font-style:normal;">375</div>
<div class="a t" style="left:673.8px;top:1244.9px;font-size:16.87px;color:#333;font-weight:400;font-style:normal;">1,765</div>
<div class="a t" style="left:656.7px;top:1592.6px;font-size:16.74px;color:#777;font-weight:400;font-style:normal;">18 Aug 25</div>
<svg class="a" style="left:0;top:0;overflow:visible" width="1" height="1"><rect x="848.02" y="1258.72" width="67.2" height="42.57" fill="#5079b0"/><rect x="848.02" y="1300.99" width="67.2" height="47.40" fill="#d4ac92"/><rect x="848.02" y="1348.09" width="67.2" height="31.82" fill="#9c7aab"/><rect x="848.02" y="1379.61" width="67.2" height="75.17" fill="#b477a3"/><rect x="848.02" y="1454.48" width="67.2" height="63.34" fill="#5e9a72"/><rect x="848.02" y="1517.52" width="67.2" height="64.78" fill="#d397b0"/><path d="M848.02 1582.0 L848.02 1258.72 L915.22 1258.72 L915.22 1582.0" fill="none" stroke="#111" stroke-width="1.15"/></svg>
<div class="a t" style="left:867.7px;top:1273.1px;font-size:16.87px;color:#222;font-weight:400;font-style:normal;">236</div>
<div class="a t" style="left:867.7px;top:1317.8px;font-size:16.87px;color:#222;font-weight:400;font-style:normal;">263</div>
<div class="a t" style="left:867.2px;top:1357.1px;font-size:16.87px;color:#222;font-weight:400;font-style:normal;">176</div>
<div class="a t" style="left:867.7px;top:1410.3px;font-size:16.87px;color:#222;font-weight:400;font-style:normal;">418</div>
<div class="a t" style="left:867.7px;top:1479.2px;font-size:16.87px;color:#222;font-weight:400;font-style:normal;">352</div>
<div class="a t" style="left:867.7px;top:1543.0px;font-size:16.87px;color:#222;font-weight:400;font-style:normal;">360</div>
<div class="a t" style="left:860.2px;top:1237.7px;font-size:16.87px;color:#333;font-weight:400;font-style:normal;">1,805</div>
<div class="a t" style="left:843.2px;top:1592.6px;font-size:16.74px;color:#777;font-weight:400;font-style:normal;">19 Aug 25</div>
<svg class="a" style="left:0;top:0;overflow:visible" width="1" height="1"><rect x="1034.45" y="1274.66" width="67.2" height="43.64" fill="#5079b0"/><rect x="1034.45" y="1318.00" width="67.2" height="42.03" fill="#d4ac92"/><rect x="1034.45" y="1359.73" width="67.2" height="29.14" fill="#9c7aab"/><rect x="1034.45" y="1388.57" width="67.2" height="65.67" fill="#b477a3"/><rect x="1034.45" y="1453.94" width="67.2" height="64.06" fill="#5e9a72"/><rect x="1034.45" y="1517.70" width="67.2" height="64.60" fill="#d397b0"/><path d="M1034.45 1582.0 L1034.45 1274.66 L1101.65 1274.66 L1101.65 1582.0" fill="none" stroke="#111" stroke-width="1.15"/></svg>
<div class="a t" style="left:1054.2px;top:1289.5px;font-size:16.87px;color:#222;font-weight:400;font-style:normal;">242</div>
<div class="a t" style="left:1054.2px;top:1332.1px;font-size:16.87px;color:#222;font-weight:400;font-style:normal;">233</div>
<div class="a t" style="left:1053.7px;top:1367.4px;font-size:16.87px;color:#222;font-weight:400;font-style:normal;">161</div>
<div class="a t" style="left:1054.2px;top:1414.5px;font-size:16.87px;color:#222;font-weight:400;font-style:normal;">365</div>
<div class="a t" style="left:1054.2px;top:1479.0px;font-size:16.87px;color:#222;font-weight:400;font-style:normal;">356</div>
<div class="a t" style="left:1054.2px;top:1543.1px;font-size:16.87px;color:#222;font-weight:400;font-style:normal;">359</div>
<div class="a t" style="left:1046.6px;top:1253.7px;font-size:16.87px;color:#333;font-weight:400;font-style:normal;">1,716</div>
<div class="a t" style="left:1030.1px;top:1592.6px;font-size:16.74px;color:#777;font-weight:400;font-style:normal;">20 Aug 25</div>
<svg class="a" style="left:0;top:0;overflow:visible" width="1" height="1"><rect x="1220.88" y="1255.67" width="67.2" height="44.00" fill="#5079b0"/><rect x="1220.88" y="1299.37" width="67.2" height="44.00" fill="#d4ac92"/><rect x="1220.88" y="1343.07" width="67.2" height="35.23" fill="#9c7aab"/><rect x="1220.88" y="1378.00" width="67.2" height="71.40" fill="#b477a3"/><rect x="1220.88" y="1449.10" width="67.2" height="66.75" fill="#5e9a72"/><rect x="1220.88" y="1515.55" width="67.2" height="66.75" fill="#d397b0"/><path d="M1220.88 1582.0 L1220.88 1255.67 L1288.08 1255.67 L1288.08 1582.0" fill="none" stroke="#111" stroke-width="1.15"/></svg>
<div class="a t" style="left:1240.6px;top:1270.7px;font-size:16.87px;color:#222;font-weight:400;font-style:normal;">244</div>
<div class="a t" style="left:1240.6px;top:1314.4px;font-size:16.87px;color:#222;font-weight:400;font-style:normal;">244</div>
<div class="a t" style="left:1240.1px;top:1353.8px;font-size:16.87px;color:#222;font-weight:400;font-style:normal;">195</div>
<div class="a t" style="left:1240.6px;top:1406.8px;font-size:16.87px;color:#222;font-weight:400;font-style:normal;">397</div>
<div class="a t" style="left:1240.6px;top:1475.5px;font-size:16.87px;color:#222;font-weight:400;font-style:normal;">371</div>
<div class="a t" style="left:1240.6px;top:1542.0px;font-size:16.87px;color:#222;font-weight:400;font-style:normal;">371</div>
<div class="a t" style="left:1233.1px;top:1234.7px;font-size:16.87px;color:#333;font-weight:400;font-style:normal;">1,822</div>
<div class="a t" style="left:1216.5px;top:1592.6px;font-size:16.74px;color:#777;font-weight:400;font-style:normal;">21 Aug 25</div>
<div class="a t" style="left:1390.0px;top:148.5px;font-size:27.16px;color:#333;font-weight:400;font-style:normal;transform:scaleX(1.1306);transform-origin:left;">Filters:</div>
<div class="a" style="left:1391px;top:189px;width:339px;height:221px;background:#dce3e6;box-sizing:border-box;border:1.3px solid #a9bfc6;"></div>
<div class="a t" style="left:1397.9px;top:208.4px;font-size:21.26px;color:#333;font-weight:400;font-style:normal;transform:scaleX(1.0870);transform-origin:left;">Date selection</div>
<svg class="a" style="left:1681px;top:201.2px" width="32" height="32" viewBox="-16 -16 32 32">
<g transform="scale(1.0)"><circle cx="0" cy="0" r="12.3" fill="none" stroke="#4166c0" stroke-width="2.4"/>
<circle cx="-0.2" cy="-5.9" r="2.2" fill="#2a52b6"/>
<path d="M-3.4 -1.9 L2.3 -1.9 L2.3 6.6 L3.9 6.6 L3.9 8.5 L-3.6 8.5 L-3.6 6.6 L-1.6 6.6 L-1.6 0 L-3.4 0 Z" fill="#2a52b6"/></g>
</svg>
<div class="a t" style="left:1405.2px;top:258.3px;font-size:15.64px;color:#222;font-weight:400;font-style:normal;transform:scaleX(1.0788);transform-origin:left;">Select end date</div>
<div class="a" style="left:1534px;top:248.2px;width:172.70000000000005px;height:26.5px;background:#fff;box-sizing:border-box;border:1.3px solid #333;border-radius:2px;"></div>
<div class="a t" style="left:1539.8px;top:253.4px;font-size:14.81px;color:#111;font-weight:400;font-style:normal;transform:scaleX(1.1825);transform-origin:left;-webkit-text-stroke:0.45px #111;">08/21/2025</div>
<div class="a t" style="left:1447.2px;top:301.3px;font-size:15.64px;color:#222;font-weight:400;font-style:normal;transform:scaleX(1.0424);transform-origin:left;">Look back</div>
<div class="a" style="left:1534px;top:292.7px;width:53.799999999999955px;height:24.80000000000001px;background:#fff;box-sizing:border-box;border:1.3px solid #333;border-radius:2px;"></div>
<div class="a t" style="left:1539.2px;top:298.7px;font-size:13.03px;color:#111;font-weight:400;font-style:normal;-webkit-text-stroke:0.45px #111;">1</div>
<div class="a" style="left:1602.3px;top:292.7px;width:85.40000000000009px;height:24.80000000000001px;background:#e8eced;box-sizing:border-box;border:1.3px solid #333;border-radius:2px;"></div>
<div class="a t" style="left:1608.5px;top:299.0px;font-size:14.40px;color:#555;font-weight:400;font-style:normal;">week</div>
<svg class="a" style="left:0;top:0;overflow:visible" width="1" height="1"><path d="M1670.7 302.5 L1678.7 302.5 L1674.7 307.5 Z" fill="#222"/></svg>
<div class="a t" style="left:1690.2px;top:301.7px;font-size:15.64px;color:#333;font-weight:400;font-style:normal;transform:scaleX(1.0324);transform-origin:left;">(s)</div>
<div class="a t" style="left:1486.5px;top:349.8px;font-size:16.19px;color:#555;font-weight:400;font-style:normal;transform:scaleX(1.1196);transform-origin:left;">You have selected</div>
<div class="a t" style="left:1456.5px;top:375.0px;font-size:16.46px;color:#2b56b3;font-weight:400;font-style:normal;transform:scaleX(1.1487);transform-origin:left;-webkit-text-stroke:0.3px #2b56b3;">08/15/2025 - 08/21/2025</div>
<div class="a" style="left:1391px;top:424.4px;width:339px;height:970.6px;background:#dce3e6;box-sizing:border-box;border:1.3px solid #a9bfc6;"></div>
<div class="a t" style="left:1397.8px;top:443.0px;font-size:23.87px;color:#333;font-weight:400;font-style:normal;transform:scaleX(0.9931);transform-origin:left;">Office</div>
<div class="a" style="left:1399.2px;top:471.3px;width:327.5999999999999px;height:26.30000000000001px;background:#e8eded;box-sizing:border-box;border:1.3px solid #222;border-radius:2px;"></div>
<div class="a t" style="left:1403.9px;top:476.5px;font-size:16.19px;color:#555;font-weight:400;font-style:normal;transform:scaleX(1.0454);transform-origin:left;">(All)</div>
<svg class="a" style="left:0;top:0;overflow:visible" width="1" height="1"><path d="M1709.85 481.8 L1718.15 481.8 L1714 487.00000000000006 Z" fill="#222"/></svg>
<div class="a t" style="left:1397.9px;top:511.9px;font-size:23.87px;color:#333;font-weight:400;font-style:normal;transform:scaleX(0.9254);transform-origin:left;">Linked Payer</div>
<div class="a" style="left:1399.2px;top:540.1800000000001px;width:327.5999999999999px;height:26.299999999999955px;background:#e8eded;box-sizing:border-box;border:1.3px solid #222;border-radius:2px;"></div>
<div class="a t" style="left:1403.9px;top:545.4px;font-size:16.19px;color:#555;font-weight:400;font-style:normal;transform:scaleX(1.0454);transform-origin:left;">(All)</div>
<svg class="a" style="left:0;top:0;overflow:visible" width="1" height="1"><path d="M1709.85 550.6800000000001 L1718.15 550.6800000000001 L1714 555.8800000000001 Z" fill="#222"/></svg>
<div class="a t" style="left:1397.8px;top:580.8px;font-size:23.87px;color:#333;font-weight:400;font-style:normal;transform:scaleX(0.9727);transform-origin:left;">Contract</div>
<div class="a" style="left:1399.2px;top:609.06px;width:327.5999999999999px;height:26.299999999999955px;background:#e8eded;box-sizing:border-box;border:1.3px solid #222;border-radius:2px;"></div>
<div class="a t" style="left:1403.9px;top:614.3px;font-size:16.19px;color:#555;font-weight:400;font-style:normal;transform:scaleX(1.0454);transform-origin:left;">(All)</div>
<svg class="a" style="left:0;top:0;overflow:visible" width="1" height="1"><path d="M1709.85 619.56 L1718.15 619.56 L1714 624.76 Z" fill="#222"/></svg>
<div class="a t" style="left:1397.8px;top:649.6px;font-size:23.87px;color:#333;font-weight:400;font-style:normal;transform:scaleX(0.9739);transform-origin:left;">Discipline</div>
<div class="a" style="left:1399.2px;top:677.94px;width:327.5999999999999px;height:26.299999999999955px;background:#e8eded;box-sizing:border-box;border:1.3px solid #222;border-radius:2px;"></div>
<div class="a t" style="left:1403.9px;top:683.1px;font-size:16.19px;color:#555;font-weight:400;font-style:normal;transform:scaleX(1.0454);transform-origin:left;">(All)</div>
<svg class="a" style="left:0;top:0;overflow:visible" width="1" height="1"><path d="M1709.85 688.44 L1718.15 688.44 L1714 693.6400000000001 Z" fill="#222"/></svg>
<div class="a t" style="left:1397.9px;top:718.5px;font-size:23.87px;color:#333;font-weight:400;font-style:normal;transform:scaleX(0.9045);transform-origin:left;">Service Code</div>
<div class="a" style="left:1399.2px;top:746.8199999999999px;width:327.5999999999999px;height:26.299999999999955px;background:#e8eded;box-sizing:border-box;border:1.3px solid #222;border-radius:2px;"></div>
<div class="a t" style="left:1403.9px;top:752.0px;font-size:16.19px;color:#555;font-weight:400;font-style:normal;transform:scaleX(1.0454);transform-origin:left;">(All)</div>
<svg class="a" style="left:0;top:0;overflow:visible" width="1" height="1"><path d="M1709.85 757.3199999999999 L1718.15 757.3199999999999 L1714 762.52 Z" fill="#222"/></svg>
<div class="a t" style="left:1397.8px;top:787.4px;font-size:23.87px;color:#333;font-weight:400;font-style:normal;transform:scaleX(0.9812);transform-origin:left;">Coordinator</div>
<div class="a" style="left:1399.2px;top:815.7px;width:327.5999999999999px;height:26.299999999999955px;background:#e8eded;box-sizing:border-box;border:1.3px solid #222;border-radius:2px;"></div>
<div class="a t" style="left:1403.9px;top:820.9px;font-size:16.19px;color:#555;font-weight:400;font-style:normal;transform:scaleX(1.0454);transform-origin:left;">(All)</div>
<svg class="a" style="left:0;top:0;overflow:visible" width="1" height="1"><path d="M1709.85 826.2 L1718.15 826.2 L1714 831.4000000000001 Z" fill="#222"/></svg>
<div class="a t" style="left:1397.8px;top:856.3px;font-size:23.87px;color:#333;font-weight:400;font-style:normal;transform:scaleX(0.9696);transform-origin:left;">Patient Team</div>
<div class="a" style="left:1399.2px;top:884.5799999999999px;width:327.5999999999999px;height:26.299999999999955px;background:#e8eded;box-sizing:border-box;border:1.3px solid #222;border-radius:2px;"></div>
<div class="a t" style="left:1403.9px;top:889.8px;font-size:16.19px;color:#555;font-weight:400;font-style:normal;transform:scaleX(1.0454);transform-origin:left;">(All)</div>
<svg class="a" style="left:0;top:0;overflow:visible" width="1" height="1"><path d="M1709.85 895.0799999999999 L1718.15 895.0799999999999 L1714 900.28 Z" fill="#222"/></svg>
<div class="a t" style="left:1397.8px;top:925.2px;font-size:23.87px;color:#333;font-weight:400;font-style:normal;transform:scaleX(0.9738);transform-origin:left;">Patient Branch</div>
<div class="a" style="left:1399.2px;top:953.46px;width:327.5999999999999px;height:26.299999999999955px;background:#e8eded;box-sizing:border-box;border:1.3px solid #222;border-radius:2px;"></div>
<div class="a t" style="left:1403.9px;top:958.7px;font-size:16.19px;color:#555;font-weight:400;font-style:normal;transform:scaleX(1.0454);transform-origin:left;">(All)</div>
<svg class="a" style="left:0;top:0;overflow:visible" width="1" height="1"><path d="M1709.85 963.96 L1718.15 963.96 L1714 969.1600000000001 Z" fill="#222"/></svg>
<div class="a t" style="left:1397.8px;top:994.0px;font-size:23.87px;color:#333;font-weight:400;font-style:normal;transform:scaleX(0.9784);transform-origin:left;">Patient Location</div>
<div class="a" style="left:1399.2px;top:1022.3399999999999px;width:327.5999999999999px;height:26.299999999999955px;background:#e8eded;box-sizing:border-box;border:1.3px solid #222;border-radius:2px;"></div>
<div class="a t" style="left:1403.9px;top:1027.5px;font-size:16.19px;color:#555;font-weight:400;font-style:normal;transform:scaleX(1.0454);transform-origin:left;">(All)</div>
<svg class="a" style="left:0;top:0;overflow:visible" width="1" height="1"><path d="M1709.85 1032.84 L1718.15 1032.84 L1714 1038.0399999999997 Z" fill="#222"/></svg>
<div class="a t" style="left:1397.9px;top:1062.9px;font-size:23.87px;color:#333;font-weight:400;font-style:normal;transform:scaleX(0.9436);transform-origin:left;">Caregiver</div>
<div class="a" style="left:1399.2px;top:1091.22px;width:327.5999999999999px;height:26.299999999999955px;background:#e8eded;box-sizing:border-box;border:1.3px solid #222;border-radius:2px;"></div>
<div class="a t" style="left:1403.9px;top:1096.4px;font-size:16.19px;color:#555;font-weight:400;font-style:normal;transform:scaleX(1.0454);transform-origin:left;">(All)</div>
<svg class="a" style="left:0;top:0;overflow:visible" width="1" height="1"><path d="M1709.85 1101.72 L1718.15 1101.72 L1714 1106.9199999999998 Z" fill="#222"/></svg>
<div class="a t" style="left:1397.9px;top:1131.8px;font-size:23.87px;color:#333;font-weight:400;font-style:normal;transform:scaleX(0.9338);transform-origin:left;">Caregiver Team</div>
<div class="a" style="left:1399.2px;top:1160.1px;width:327.5999999999999px;height:26.299999999999955px;background:#e8eded;box-sizing:border-box;border:1.3px solid #222;border-radius:2px;"></div>
<div class="a t" style="left:1403.9px;top:1165.3px;font-size:16.19px;color:#555;font-weight:400;font-style:normal;transform:scaleX(1.0454);transform-origin:left;">(All)</div>
<svg class="a" style="left:0;top:0;overflow:visible" width="1" height="1"><path d="M1709.85 1170.6 L1718.15 1170.6 L1714 1175.7999999999997 Z" fill="#222"/></svg>
<div class="a t" style="left:1397.9px;top:1200.7px;font-size:23.87px;color:#333;font-weight:400;font-style:normal;transform:scaleX(0.9247);transform-origin:left;">EVV type</div>
<div class="a" style="left:1399.2px;top:1228.98px;width:327.5999999999999px;height:26.299999999999955px;background:#e8eded;box-sizing:border-box;border:1.3px solid #222;border-radius:2px;"></div>
<div class="a t" style="left:1403.9px;top:1234.2px;font-size:16.19px;color:#555;font-weight:400;font-style:normal;transform:scaleX(1.0454);transform-origin:left;">(All)</div>
<svg class="a" style="left:0;top:0;overflow:visible" width="1" height="1"><path d="M1709.85 1239.48 L1718.15 1239.48 L1714 1244.6799999999998 Z" fill="#222"/></svg>
<div class="a t" style="left:1397.8px;top:1269.6px;font-size:23.87px;color:#333;font-weight:400;font-style:normal;transform:scaleX(0.9677);transform-origin:left;">Exception Description</div>
<div class="a" style="left:1399.2px;top:1297.86px;width:327.5999999999999px;height:26.299999999999955px;background:#e8eded;box-sizing:border-box;border:1.3px solid #222;border-radius:2px;"></div>
<div class="a t" style="left:1403.9px;top:1303.1px;font-size:16.19px;color:#555;font-weight:400;font-style:normal;transform:scaleX(1.0454);transform-origin:left;">(All)</div>
<svg class="a" style="left:0;top:0;overflow:visible" width="1" height="1"><path d="M1709.85 1308.36 L1718.15 1308.36 L1714 1313.5599999999997 Z" fill="#222"/></svg>
<div class="a" style="left:1405.8px;top:1340.3px;width:308.20000000000005px;height:32.40000000000009px;background:#2850b4;"></div>
<div class="a" style="left:1405.8px;top:1374.5px;width:308.20000000000005px;height:1.2999999999999545px;background:#2850b4;"></div>
<div class="a t" style="left:1450.9px;top:1348.6px;font-size:21.26px;color:#fff;font-weight:400;font-style:normal;transform:scaleX(1.1106);transform-origin:left;">Reset dropdown filters</div>
<div class="a" style="left:1547.9px;top:401.2px;width:48px;height:48px;border-radius:50%;background:#e60a0a"></div>
<div class="a t" style="left:1563.9px;top:412.2px;font-size:29.22px;color:#fff;font-weight:400;font-style:normal;">3</div>
<div class="a" style="left:1391px;top:1403.1px;width:339px;height:215.5px;background:#dce3e6;box-sizing:border-box;border:1.3px solid #a9bfc6;"></div>
<div class="a t" style="left:1403.3px;top:1422.4px;font-size:20.99px;color:#333;font-weight:400;font-style:normal;transform:scaleX(1.0796);transform-origin:left;">Percentage or number</div>
<svg class="a" style="left:0;top:0;overflow:visible" width="1" height="1">
<circle cx="1419.3" cy="1472.8" r="8.8" fill="#fff" stroke="#555" stroke-width="1.2"/>
<circle cx="1419.3" cy="1501.3" r="8.8" fill="#fff" stroke="#555" stroke-width="1.2"/>
<circle cx="1419.3" cy="1501.3" r="4.4" fill="#333"/>
</svg>
<div class="a t" style="left:1434.8px;top:1465.7px;font-size:15.78px;color:#333;font-weight:400;font-style:normal;">%</div>
<div class="a t" style="left:1434.8px;top:1493.6px;font-size:15.78px;color:#333;font-weight:400;font-style:normal;">#</div>
<div class="a t" style="left:1403.3px;top:1544.4px;font-size:20.99px;color:#333;font-weight:400;font-style:normal;transform:scaleX(1.0761);transform-origin:left;">EVV non-compliance target</div>
<div class="a" style="left:1405.2px;top:1570px;width:310.39999999999986px;height:25.40000000000009px;background:#fff;box-sizing:border-box;border:1.4px solid #222;border-radius:2px;"></div>
<div class="a t" style="left:1410.0px;top:1574.7px;font-size:14.81px;color:#111;font-weight:400;font-style:normal;transform:scaleX(1.1406);transform-origin:left;-webkit-text-stroke:0.45px #111;">40%</div>
</body></html>
